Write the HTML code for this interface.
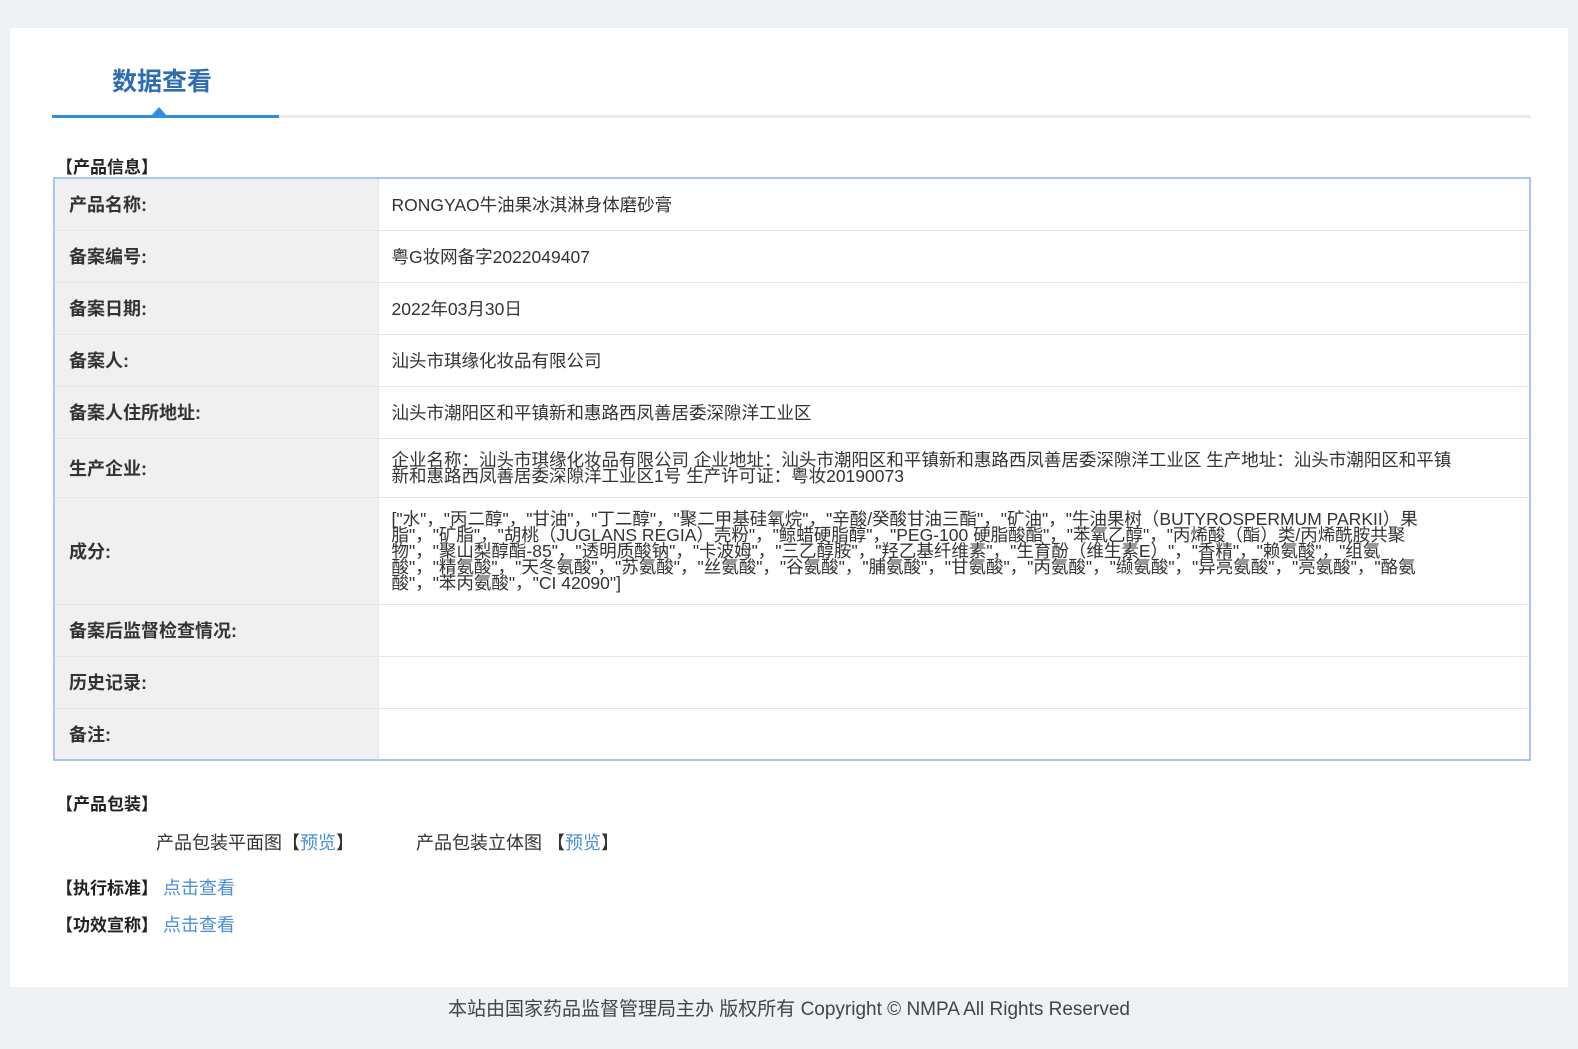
<!DOCTYPE html>
<html><head><meta charset="utf-8"><style>
*{margin:0;padding:0;box-sizing:border-box}
body{width:1578px;height:1049px;background:#eff2f5;font-family:"Liberation Sans","Noto Sans CJK SC",sans-serif;color:#333;position:relative;overflow:hidden}
.panel{position:absolute;left:10px;top:28px;width:1558px;height:959px;background:#fff}
.title{position:absolute;left:112px;top:62px;font-size:25px;font-weight:bold;color:#2f6cb2}
.gline{position:absolute;left:52px;top:115px;width:1479px;height:3px;background:#ececec}
.bline{position:absolute;left:52px;top:115px;width:227px;height:3px;background:#2d8fe0}
.tri{position:absolute;left:151px;top:107px;width:0;height:0;border-left:8px solid transparent;border-right:8px solid transparent;border-bottom:9px solid #2d8fe0}
.sec{position:absolute;font-size:17px;font-weight:bold;color:#222}
table{position:absolute;left:53px;top:177px;width:1478px;border-collapse:collapse;border:2px solid #a9c6ec}
td{border-top:1px solid #e6e6e6;font-size:17.5px;vertical-align:middle}
td.l{width:324px;background:#f0f0f0;font-weight:bold;font-size:18px;padding-left:14px;border-right:1px solid #e6e6e6}
td.v{padding-left:13px;white-space:nowrap}
.ml{line-height:16px}
a{color:#4a8fd8;text-decoration:none}
.foot{position:absolute;left:0;width:1578px;top:994px;text-align:center;font-size:19px;color:#444}
</style></head><body>
<div class="panel"></div>
<div class="title">数据查看</div>
<div class="gline"></div><div class="bline"></div><div class="tri"></div>
<div class="sec" style="left:56px;top:153px">【产品信息】</div>
<table>
<tr style="height:52px"><td class="l">产品名称:</td><td class="v">RONGYAO牛油果冰淇淋身体磨砂膏</td></tr>
<tr style="height:52px"><td class="l">备案编号:</td><td class="v">粤G妆网备字2022049407</td></tr>
<tr style="height:52px"><td class="l">备案日期:</td><td class="v">2022年03月30日</td></tr>
<tr style="height:52px"><td class="l">备案人:</td><td class="v">汕头市琪缘化妆品有限公司</td></tr>
<tr style="height:52px"><td class="l">备案人住所地址:</td><td class="v">汕头市潮阳区和平镇新和惠路西凤善居委深隙洋工业区</td></tr>
<tr style="height:59px"><td class="l">生产企业:</td><td class="v ml">企业名称：汕头市琪缘化妆品有限公司 企业地址：汕头市潮阳区和平镇新和惠路西凤善居委深隙洋工业区 生产地址：汕头市潮阳区和平镇<br>新和惠路西凤善居委深隙洋工业区1号 生产许可证：粤妆20190073</td></tr>
<tr style="height:107px"><td class="l">成分:</td><td class="v ml">["水"，"丙二醇"，"甘油"，"丁二醇"，"聚二甲基硅氧烷"，"辛酸/癸酸甘油三酯"，"矿油"，"牛油果树（BUTYROSPERMUM PARKII）果<br>脂"，"矿脂"，"胡桃（JUGLANS REGIA）壳粉"，"鲸蜡硬脂醇"，"PEG-100 硬脂酸酯"，"苯氧乙醇"，"丙烯酸（酯）类/丙烯酰胺共聚<br>物"，"聚山梨醇酯-85"，"透明质酸钠"，"卡波姆"，"三乙醇胺"，"羟乙基纤维素"，"生育酚（维生素E）"，"香精"，"赖氨酸"，"组氨<br>酸"，"精氨酸"，"天冬氨酸"，"苏氨酸"，"丝氨酸"，"谷氨酸"，"脯氨酸"，"甘氨酸"，"丙氨酸"，"缬氨酸"，"异亮氨酸"，"亮氨酸"，"酪氨<br>酸"，"苯丙氨酸"，"CI 42090"]</td></tr>
<tr style="height:52px"><td class="l">备案后监督检查情况:</td><td class="v"></td></tr>
<tr style="height:52px"><td class="l">历史记录:</td><td class="v"></td></tr>
<tr style="height:52px"><td class="l">备注:</td><td class="v"></td></tr>
</table>
<div class="sec" style="left:56px;top:790px">【产品包装】</div>
<div style="position:absolute;left:156px;top:829px;font-size:18px">产品包装平面图【<a>预览</a>】</div>
<div style="position:absolute;left:416px;top:829px;font-size:18px">产品包装立体图 【<a>预览</a>】</div>
<div style="position:absolute;left:56px;top:874px;font-size:18px"><b style="color:#222;font-size:17px">【执行标准】</b> <a>点击查看</a></div>
<div style="position:absolute;left:56px;top:911px;font-size:18px"><b style="color:#222;font-size:17px">【功效宣称】</b> <a>点击查看</a></div>
<div class="foot">本站由国家药品监督管理局主办 版权所有 Copyright © NMPA All Rights Reserved</div>
</body></html>
